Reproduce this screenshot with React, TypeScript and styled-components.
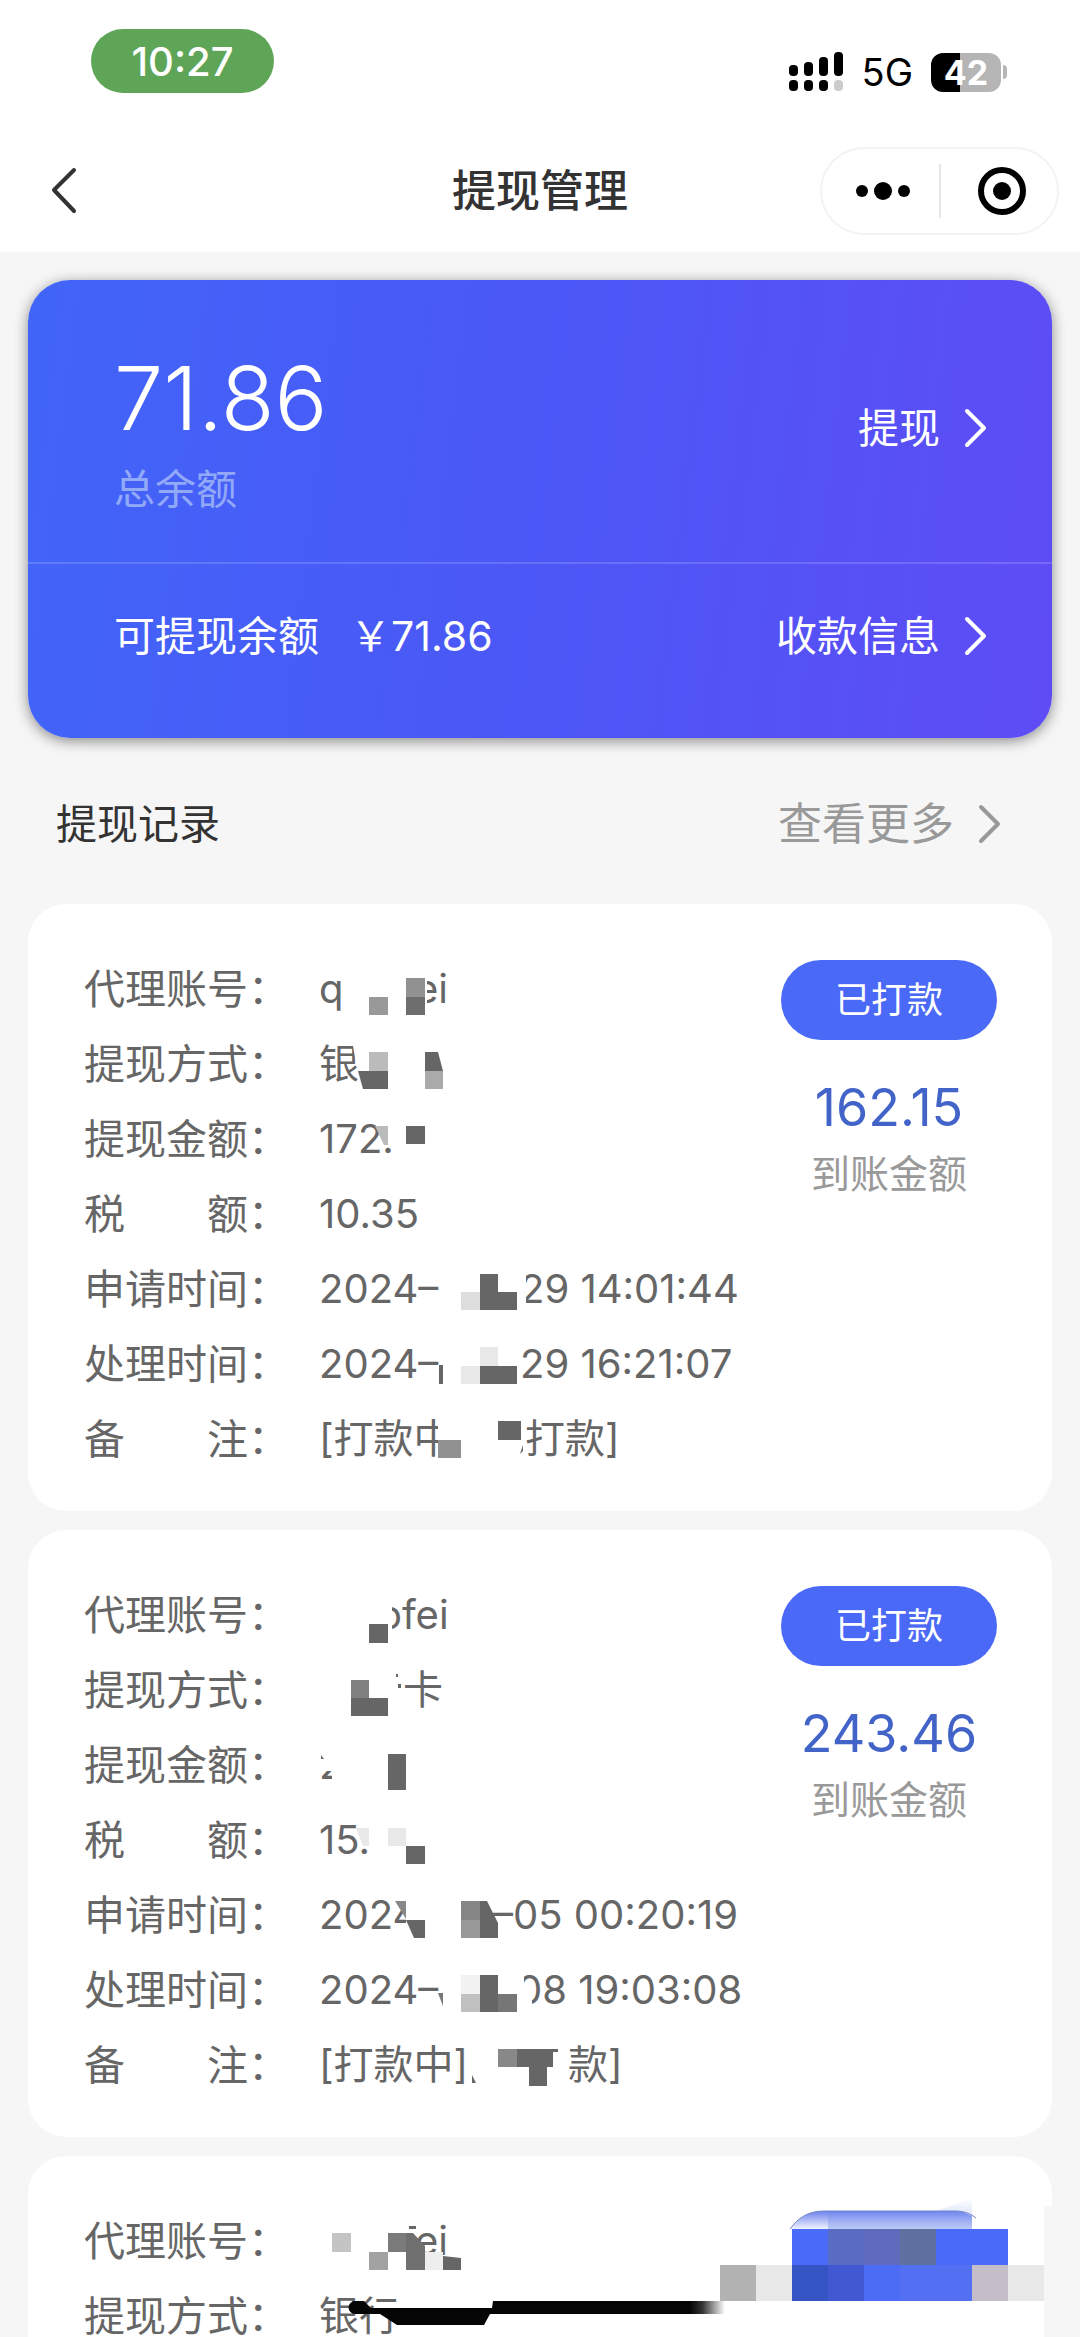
import React from "react";
import styled, { createGlobalStyle } from "styled-components";

const GlobalStyle = createGlobalStyle`
  * { box-sizing: border-box; }
  body {
    margin: 0;
    background: #f6f6f6;
    font-family: Inter, "Noto Sans CJK SC", sans-serif;
    color: #333;
  }
  button {
    font: inherit;
    color: inherit;
    background: none;
    border: 0;
    padding: 0;
    cursor: pointer;
  }
`;

const Page = styled.div`
  height: 100vh;
  overflow: hidden;
`;

const TopArea = styled.header`
  background: #fff;
  height: 252px;
`;

const StatusBar = styled.div`
  display: flex;
  justify-content: space-between;
  align-items: flex-start;
  padding: 29px 73px 0 91px;
  height: 122px;
`;

const Clock = styled.div`
  width: 183px;
  height: 64px;
  border-radius: 32px;
  background: #5fa557;
  color: #fff;
  font-size: 40px;
  line-height: 66px;
  font-weight: 500;
  text-align: center;
`;

const StatusIcons = styled.div`
  display: flex;
  align-items: center;
  gap: 18px;
  margin-top: 22px;
  height: 42px;
  color: #000;
  font-size: 38px;
  line-height: 44px;
  font-weight: 400;
`;

const Battery = styled.div`
  display: flex;
  align-items: center;
  gap: 2px;
`;

const BatteryBody = styled.div`
  width: 70px;
  height: 39px;
  border-radius: 12px;
  background: linear-gradient(90deg, #000 42%, #b5b5b5 42%);
  color: #fff;
  font-size: 34px;
  line-height: 40px;
  font-weight: 700;
  text-align: center;
`;

const BatteryTip = styled.div`
  width: 4px;
  height: 14px;
  border-radius: 0 4px 4px 0;
  background: #b5b5b5;
`;

const NavBar = styled.nav`
  display: grid;
  grid-template-columns: 1fr auto 1fr;
  align-items: center;
  height: 138px;
  padding: 0 21px;
`;

const BackButton = styled.button`
  justify-self: start;
  margin-left: 25px;
  width: 40px;
  height: 52px;
  svg { display: block; }
`;

const Title = styled.h1`
  margin: 0;
  font-size: 44px;
  line-height: 60px;
  font-weight: 500;
`;

const Capsule = styled.div`
  justify-self: end;
  display: flex;
  align-items: center;
  width: 239px;
  height: 88px;
  border: 2px solid #f3f3f3;
  border-radius: 44px;
`;

const CapsuleButton = styled.button`
  flex: 1;
  height: 54px;
  padding-left: 6px;
  display: flex;
  align-items: center;
  justify-content: center;
  & + & { border-left: 2px solid #e6e6e6; }
`;

const Content = styled.main`
  padding: 28px 28px 0;
`;

const BalanceCard = styled.section`
  height: 458px;
  border-radius: 42px;
  background: linear-gradient(97deg, #4165f8 0%, #4b57f6 50%, #5e4cf5 100%);
  box-shadow: 0 3px 14px rgba(0, 0, 0, 0.45);
  color: #fff;
`;

const BalanceRow = styled.div<{ $top?: boolean }>`
  display: flex;
  align-items: center;
  justify-content: space-between;
  height: ${(p) => (p.$top ? 284 : 144)}px;
  padding: ${(p) => (p.$top ? "14px 64px 0 86px" : "0 64px 0 86px")};
  border-bottom: ${(p) => (p.$top ? "2px solid rgba(255,255,255,0.16)" : "0")};
  font-size: 41px;
  line-height: 60px;
`;

const Total = styled.div`
  padding-top: 8px;
  font-size: 88px;
  line-height: 106px;
  font-weight: 300;
`;

const TotalLabel = styled.div`
  color: #92a9f8;
  line-height: 60px;
  margin-top: 8px;
`;

const Available = styled.div`
  display: flex;
  gap: 31px;
`;

const LinkButton = styled.button<{ $muted?: boolean }>`
  display: flex;
  align-items: center;
  gap: 24px;
  font-size: ${(p) => (p.$muted ? 44 : 41)}px;
  line-height: 60px;
  color: ${(p) => (p.$muted ? "#999" : "#fff")};
`;

const SectionHead = styled.div`
  display: flex;
  align-items: center;
  justify-content: space-between;
  height: 166px;
  padding: 6px 50px 0 28px;
`;

const SectionTitle = styled.h2`
  margin: 0;
  font-size: 41px;
  line-height: 60px;
  font-weight: 400;
`;

const RecordCard = styled.article`
  position: relative;
  display: flex;
  justify-content: space-between;
  padding: 47px 55px 35px 56px;
  margin-bottom: 19px;
  border-radius: 38px;
  background: #fff;
`;

const Fields = styled.dl`
  margin: 0;
  color: #666;
  font-size: 40px;
  line-height: 76px;
`;

const Field = styled.div`
  display: flex;
  height: 75px;
`;

const Label = styled.dt`
  width: 235px;
  font-size: 41px;
  white-space: pre;
`;

const Value = styled.dd`
  position: relative;
  margin: 0;
  display: flex;
  white-space: pre;
`;

const Segment = styled.span<{ $w?: number }>`
  display: block;
  width: ${(p) => (p.$w ? `${p.$w}px` : "auto")};
`;

const Mosaic = styled.svg`
  position: absolute;
  left: 0;
  top: 0;
  overflow: visible;
`;

const Result = styled.div`
  width: 216px;
  padding-top: 9px;
  text-align: center;
`;

const StatusButton = styled.button`
  width: 100%;
  height: 80px;
  border-radius: 40px;
  background: #4a69f6;
  color: #fff;
  font-size: 36px;
  line-height: 80px;
`;

const Amount = styled.div`
  margin-top: 34px;
  font-size: 52px;
  line-height: 68px;
  color: #4263c8;
`;

const AmountLabel = styled.div`
  font-size: 39px;
  line-height: 64px;
  color: #999;
`;

const StatusMosaic = styled.svg`
  position: absolute;
  right: 0;
  top: 0;
`;

type Shape = [string, string];
type Piece = { text: string; w?: number };
type Row = { label: string; pieces: Piece[]; mask?: Shape[] };
type Rec = { rows: Row[]; amount?: string };

const DARK = "#666";
const box = (x: number, y: number, w: number, h: number, c = DARK): Shape => [
  `M${x} ${y}h${w}v${h}h${-w}z`,
  c,
];
const poly = (d: string, c = DARK): Shape => [d, c];

const records: Rec[] = [
  {
    amount: "162.15",
    rows: [
      {
        label: "代理账号：",
        pieces: [{ text: "q", w: 96 }, { text: "ei" }],
        mask: [
          box(86, 20, 22, 46, "#fff"),
          box(50, 46, 19, 18, "#999"),
          box(87, 27, 19, 19, "#919191"),
          box(87, 46, 19, 18, "#6e6e6e"),
        ],
      },
      {
        label: "提现方式：",
        pieces: [{ text: "银" }],
        mask: [
          poly("M34 20H46V62H43L39 48z", "#fff"),
          box(50, 26, 19, 19, "#bbb"),
          poly("M39 45H69V63H44z"),
          poly("M106 26H119L124 45H106z"),
          box(106, 45, 18, 18, "#aaa"),
        ],
      },
      {
        label: "提现金额：",
        pieces: [{ text: "172." }],
        mask: [
          poly("M61 52H64L69 60V66H60z", "#fff"),
          poly("M56 25H69V44H65z", "#bbb"),
          box(87, 25, 19, 18),
        ],
      },
      { label: "税　　额：", pieces: [{ text: "10.35" }] },
      {
        label: "申请时间：",
        pieces: [{ text: "2024–", w: 201 }, { text: "29 14:01:44" }],
        mask: [
          box(198, 18, 9, 44, "#fff"),
          box(142, 41, 19, 18, "#ddd"),
          poly("M161 23H179V41H198V59H161z"),
        ],
      },
      {
        label: "处理时间：",
        pieces: [{ text: "2024–", w: 201 }, { text: "29 16:21:07" }],
        mask: [
          box(120, 39, 4, 19),
          box(161, 21, 18, 19, "#e8e8e8"),
          box(142, 40, 19, 18, "#e8e8e8"),
          box(161, 40, 37, 18),
        ],
      },
      {
        label: "备　　注：",
        pieces: [{ text: "[打款中", w: 206 }, { text: "打款]" }],
        mask: [
          box(119, 14, 24, 48, "#fff"),
          box(119, 39, 23, 18, "#919191"),
          box(179, 20, 23, 19),
          poly("M201 53L204 44V50z"),
        ],
      },
    ],
  },
  {
    amount: "243.46",
    rows: [
      {
        label: "代理账号：",
        pieces: [{ text: "", w: 59 }, { text: "ofei" }],
        mask: [
          poly("M55 20H73V66H55z", "#fff"),
          box(50, 47, 19, 19),
        ],
      },
      {
        label: "提现方式：",
        pieces: [{ text: "", w: 84 }, { text: "卡" }],
        mask: [
          box(32, 28, 18, 19, "#808080"),
          box(32, 46, 37, 18),
          box(77, 22, 2, 3),
          box(79, 32, 3, 4),
        ],
      },
      {
        label: "提现金额：",
        pieces: [{ text: "2" }],
        mask: [
          poly("M0 14H30V62H13V44H0z", "#fff"),
          poly("M2 28L5 32H2z"),
          box(69, 27, 18, 36),
        ],
      },
      {
        label: "税　　额：",
        pieces: [{ text: "15." }],
        mask: [
          poly("M37 26H50V44H44z", "#e8e8e8"),
          box(69, 26, 18, 18, "#e8e8e8"),
          box(87, 44, 19, 18),
        ],
      },
      {
        label: "申请时间：",
        pieces: [{ text: "2024", w: 174 }, { text: "–05 00:20:19" }],
        mask: [
          box(87, 18, 20, 44, "#fff"),
          poly("M76 24H87V42z", "#888"),
          poly("M87 43H106V61H95z"),
          box(142, 24, 19, 19, "#858585"),
          box(142, 43, 19, 18, "#999"),
          poly("M161 24H168L179 46V61H161z"),
        ],
      },
      {
        label: "处理时间：",
        pieces: [{ text: "2024–", w: 198 }, { text: "08 19:03:08" }],
        mask: [
          poly("M197 18H205V30L213 44V60H197z", "#fff"),
          poly("M119 41H124V54z", "#777"),
          box(142, 23, 19, 19, "#f2f2f2"),
          box(142, 42, 19, 18, "#c0c0c0"),
          box(161, 23, 18, 37),
          box(179, 42, 19, 18, "#777"),
        ],
      },
      {
        label: "备　　注：",
        pieces: [{ text: "[打款中]", w: 249 }, { text: "款]" }],
        mask: [
          poly("M153 48L157 56H153z"),
          box(179, 22, 19, 18, "#888"),
          poly("M198 22H239V25H234V40H228V59H210V40H198z"),
        ],
      },
    ],
  },
  {
    rows: [
      {
        label: "代理账号：",
        pieces: [{ text: "", w: 96 }, { text: "ei" }],
        mask: [
          box(13, 30, 19, 19, "#c4c4c4"),
          box(50, 49, 19, 18, "#a2a2a2"),
          box(69, 30, 18, 19, "#7b7b7b"),
          poly("M87 30H94L106 43V67H87z", "#707070"),
          box(106, 49, 18, 18, "#eee"),
          poly("M124 53L142 55V67H124z"),
          box(90, 23, 7, 3),
        ],
      },
      {
        label: "提现方式：",
        pieces: [{ text: "银行" }],
        mask: [
          poly("M36 23H45L52 30H173L174 23H371V36H171L165 47H78L61 36H36A6 6 0 0 1 36 23z", "#050505"),
          poly("M371 23H406V36H371z", "url(#strokeFade)"),
        ],
      },
    ],
  },
];

const cells: [number, number, string][] = [
  [72, 73, "#4a6bf7"], [108, 73, "#5a6bc4"], [144, 73, "#606bbd"], [180, 73, "#5f6f9f"],
  [216, 73, "#4a6bf7"], [252, 73, "#4a6bf7"],
  [0, 109, "#b2b2b2"], [36, 109, "#e8e8e8"], [72, 109, "#3655c5"], [108, 109, "#4158d2"],
  [144, 109, "#4c6cf5"], [180, 109, "#5370f3"], [216, 109, "#5370f3"], [252, 109, "#c5bdc9"],
  [288, 109, "#e8e8e8"],
];

const Chevron = ({ color }: { color: string }) => (
  <svg width="24" height="40" viewBox="0 0 24 40" fill="none" aria-hidden="true">
    <path d="M3 3L20 20L3 37" stroke={color} strokeWidth="4" strokeLinecap="round" strokeLinejoin="round" />
  </svg>
);

const Signal = () => (
  <svg width="55" height="40" viewBox="0 0 55 40" aria-hidden="true">
    {[0, 15, 30, 45].map((x, i) => (
      <g key={x}>
        <rect x={x} y={[13, 10, 5, 0][i]} width="9" height={[11, 14, 19, 24][i]} rx="4" fill="#000" />
        <rect x={x} y="28" width="9" height="11" rx="4" fill={i === 3 ? "#ccc" : "#000"} />
      </g>
    ))}
  </svg>
);

const HiddenStatus = () => (
  <StatusMosaic width="332" height="232" viewBox="0 0 332 232" aria-hidden="true">
    <defs>
      <linearGradient id="strokeFade">
        <stop offset="0" stopColor="#050505" />
        <stop offset="0.35" stopColor="#333" />
        <stop offset="1" stopColor="#fff" />
      </linearGradient>
      <linearGradient id="capFade" x1="0" y1="0" x2="0" y2="1">
        <stop offset="0" stopColor="#6c83ee" />
        <stop offset="1" stopColor="#6c83ee" stopOpacity="0.1" />
      </linearGradient>
      <linearGradient id="hazeFade" x1="0" y1="0" x2="0" y2="1">
        <stop offset="0" stopColor="#c3d0f5" stopOpacity="0" />
        <stop offset="1" stopColor="#c3d0f5" />
      </linearGradient>
    </defs>
    <path d="M324 50H332V232H324z" fill="#f6f6f6" />
    <path d="M108 55H216L252 42V73H108z" fill="url(#hazeFade)" />
    <path d="M70 73C78 62 88 55 104 55H236C242 55 248 58 252 60V73z" fill="url(#capFade)" />
    <path d="M70 73C78 62 88 55 104 55H236C244 55 251 58 256 62" fill="none" stroke="#7486c8" strokeWidth="1" />
    {cells.map(([x, y, c]) => (
      <rect key={`${x}-${y}`} x={x} y={y} width="36" height="36" fill={c} />
    ))}
  </StatusMosaic>
);

const FieldRow = ({ row }: { row: Row }) => (
  <Field>
    <Label>{row.label}</Label>
    <Value>
      {row.pieces.map((p, i) => (
        <Segment key={i} $w={p.w}>{p.text}</Segment>
      ))}
      {row.mask && (
        <Mosaic width="440" height="75" viewBox="0 0 440 75" aria-hidden="true">
          {row.mask.map(([d, c], i) => (
            <path key={i} d={d} fill={c} />
          ))}
        </Mosaic>
      )}
    </Value>
  </Field>
);

export default function App() {
  return (
    <Page>
      <GlobalStyle />
      <TopArea>
        <StatusBar>
          <Clock>10:27</Clock>
          <StatusIcons>
            <Signal />
            <span>5G</span>
            <Battery>
              <BatteryBody>42</BatteryBody>
              <BatteryTip />
            </Battery>
          </StatusIcons>
        </StatusBar>
        <NavBar>
          <BackButton aria-label="返回">
            <svg width="36" height="52" viewBox="0 0 36 52" fill="none">
              <path d="M28 5L8 25L28 46" stroke="#333" strokeWidth="4" strokeLinecap="round" strokeLinejoin="round" />
            </svg>
          </BackButton>
          <Title>提现管理</Title>
          <Capsule>
            <CapsuleButton aria-label="更多">
              <svg width="54" height="20" viewBox="0 0 54 20">
                <circle cx="6" cy="10" r="6" />
                <circle cx="27" cy="10" r="9" />
                <circle cx="48" cy="10" r="6" />
              </svg>
            </CapsuleButton>
            <CapsuleButton aria-label="关闭">
              <svg width="50" height="50" viewBox="0 0 50 50">
                <circle cx="25" cy="25" r="21" fill="none" stroke="#000" strokeWidth="6" />
                <circle cx="25" cy="25" r="9" />
              </svg>
            </CapsuleButton>
          </Capsule>
        </NavBar>
      </TopArea>
      <Content>
        <BalanceCard>
          <BalanceRow $top>
            <div>
              <Total>71.86</Total>
              <TotalLabel>总余额</TotalLabel>
            </div>
            <LinkButton>提现<Chevron color="#fff" /></LinkButton>
          </BalanceRow>
          <BalanceRow>
            <Available>
              <span>可提现余额</span>
              <span>￥71.86</span>
            </Available>
            <LinkButton>收款信息<Chevron color="#fff" /></LinkButton>
          </BalanceRow>
        </BalanceCard>
        <SectionHead>
          <SectionTitle>提现记录</SectionTitle>
          <LinkButton $muted>查看更多<Chevron color="#999" /></LinkButton>
        </SectionHead>
        {records.map((r, i) => (
          <RecordCard key={i}>
            <Fields>
              {r.rows.map((row) => (
                <FieldRow key={row.label} row={row} />
              ))}
            </Fields>
            {r.amount ? (
              <Result>
                <StatusButton>已打款</StatusButton>
                <Amount>{r.amount}</Amount>
                <AmountLabel>到账金额</AmountLabel>
              </Result>
            ) : (
              <HiddenStatus />
            )}
          </RecordCard>
        ))}
      </Content>
    </Page>
  );
}
